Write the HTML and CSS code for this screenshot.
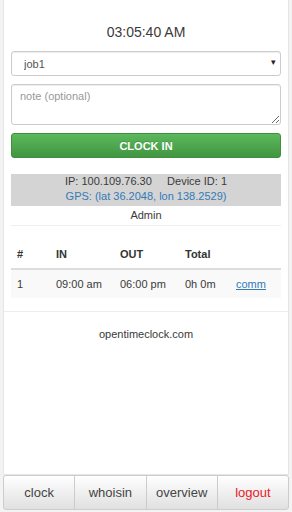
FILE: index.html
```html
<!DOCTYPE html>
<html lang="en">
<head>
    <meta charset="UTF-8">
    <meta name="viewport" content="width=device-width, initial-scale=1.0">
    <title>Open Time Clock</title>
    <link rel="stylesheet" href="styles.css">
</head>
<body>
    <div class="panel">
        <div class="content">
            <div class="time">03:05:40 AM</div>

            <div class="select-wrap">
                <select class="field job-select">
                    <option>job1</option>
                </select>
            </div>

            <textarea class="field note" placeholder="note (optional)"></textarea>

            <button class="btn-clock">CLOCK IN</button>

            <div class="info">
                <div>IP: 100.109.76.30&nbsp;&nbsp;&nbsp;&nbsp; Device ID: 1</div>
                <div class="gps">GPS: (lat 36.2048, lon 138.2529)</div>
            </div>
            <div class="user">Admin</div>

            <!-- punches for today -->
            <table class="punches">
                <thead>
                    <tr>
                        <th class="c-num">#</th>
                        <th class="c-in">IN</th>
                        <th class="c-out">OUT</th>
                        <th class="c-total">Total</th>
                        <th class="c-comm"></th>
                    </tr>
                </thead>
                <tbody>
                    <tr>
                        <td>1</td>
                        <td>09:00 am</td>
                        <td>06:00 pm</td>
                        <td>0h 0m</td>
                        <td><a href="#">comm</a></td>
                    </tr>
                </tbody>
            </table>
        </div>

        <div class="site">opentimeclock.com</div>
    </div>

    <!-- bottom navigation -->
    <nav class="nav">
        <a href="#" class="nav-btn">clock</a>
        <a href="#" class="nav-btn">whoisin</a>
        <a href="#" class="nav-btn">overview</a>
        <a href="#" class="nav-btn logout">logout</a>
    </nav>
</body>
</html>
```

FILE: styles.css
```css
/* Basic reset */
* {
    margin: 0;
    padding: 0;
    box-sizing: border-box;
}

html, body {
    height: 100%;
}

body {
    font-family: "Liberation Sans", Arial, sans-serif;
    font-size: 11px;
    color: #3a3a3a;
    background-color: #f3f3f3;
    display: flex;
    flex-direction: column;
    padding: 0 3px 2px;
}

.panel {
    flex: 1;
    background-color: #fff;
    border: 1px solid #e6e6e6;
    border-top: none;
}

.content {
    padding: 22px 7px 0;
}

.time {
    text-align: center;
    font-size: 14px;
    line-height: 20px;
    margin-bottom: 9px;
}

.field {
    display: block;
    width: 100%;
    font-family: inherit;
    font-size: 11px;
    color: #555;
    background-color: #fff;
    border: 1px solid #ccc;
    border-radius: 3px;
    box-shadow: inset 0 1px 1px rgba(0, 0, 0, 0.075);
}

.select-wrap {
    position: relative;
    margin-bottom: 8px;
}

.select-wrap::after {
    content: "\25BE";
    position: absolute;
    right: 5px;
    top: 6px;
    font-size: 9px;
    color: #222;
    pointer-events: none;
}

.job-select {
    -webkit-appearance: none;
    appearance: none;
    height: 25px;
    padding: 0 12px;
    outline: none;
}

.note {
    height: 41px;
    padding: 5px 8px;
    margin-bottom: 8px;
    resize: vertical;
}

.note::placeholder {
    color: #999;
}

.btn-clock {
    display: block;
    width: 100%;
    height: 25px;
    font-family: inherit;
    font-size: 11px;
    font-weight: bold;
    color: #fff;
    background-image: linear-gradient(to bottom, #5cb85c 0%, #419641 100%);
    border: 1px solid #3e8f3e;
    border-radius: 3px;
    text-shadow: 0 -1px 0 rgba(0, 0, 0, 0.15);
    cursor: pointer;
}

.info {
    margin-top: 16px;
    background-color: #d4d4d4;
    text-align: center;
    line-height: 15px;
    padding: 0 0 2px;
}

.gps {
    color: #337ab7;
}

.user {
    text-align: center;
    line-height: 19px;
    border-bottom: 1px solid #f0f0f0;
}

.punches {
    width: 100%;
    margin-top: 12px;
    border-collapse: collapse;
}

.punches th,
.punches td {
    text-align: left;
    padding: 6px 6px;
    line-height: 16px;
    font-weight: normal;
}

.punches th {
    font-weight: bold;
    color: #333;
    padding-top: 8px;
    border-bottom: 2px solid #ddd;
}

.punches tbody tr {
    background-color: #f9f9f9;
}

.c-num { width: 39px; }
.c-in { width: 64px; }
.c-out { width: 65px; }
.c-total { width: 51px; }

.punches a {
    color: #337ab7;
}

.site {
    margin-top: 13px;
    border-top: 1px solid #eee;
    text-align: center;
    padding-top: 15px;
    line-height: 14px;
}

.nav {
    display: flex;
    height: 35px;
}

.nav-btn {
    flex: 1;
    display: flex;
    align-items: center;
    justify-content: center;
    font-size: 13px;
    color: #444;
    text-decoration: none;
    background-image: linear-gradient(to bottom, #fff 0%, #e0e0e0 100%);
    border: 1px solid #ccc;
    margin-left: -1px;
}

.nav-btn:first-child {
    margin-left: 0;
    border-radius: 3px 0 0 3px;
}

.nav-btn:last-child {
    border-radius: 0 3px 3px 0;
}

.logout {
    color: #e8202a;
}
```
